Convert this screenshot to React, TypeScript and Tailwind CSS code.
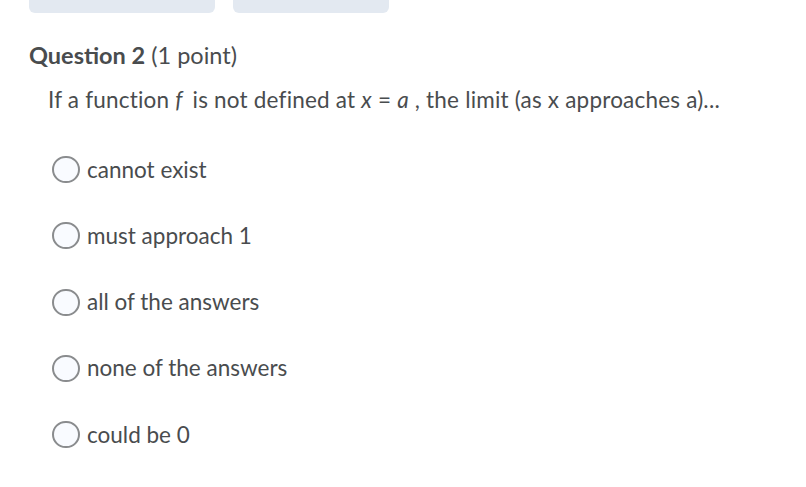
import React from 'react';

const options = ['cannot exist', 'must approach 1', 'all of the answers', 'none of the answers', 'could be 0'];

export default function App() {
  return (
    <div className="w-[806px] h-[487px] bg-white overflow-hidden text-[#494c4e]" style={{ fontFamily: 'Lato, "Open Sans", sans-serif' }}>
      {/* top buttons (cut off) */}
      <div className="flex gap-[18px] pl-[29px]">
        <div className="w-[186px] h-[13px] rounded-b-[6px] bg-[#e3e9f1]" />
        <div className="w-[156px] h-[13px] rounded-b-[6px] bg-[#e3e9f1]" />
      </div>

      <div className="pl-[29px] pt-[27px]">
        <h2 className="text-[23.5px] leading-[30px]">
          <span className="font-bold">Question 2</span> <span>(1 point)</span>
        </h2>
      </div>

      <p className="pl-[48px] pt-[15px] text-[22.5px] leading-[30px] tracking-[0.2px]">
        If a function <i className="pr-1">f</i> is not defined at <i>x</i> = <i>a</i> , the limit (as x approaches a)...
      </p>

      <div className="flex flex-col pl-[52px] pt-[39.5px] gap-[36.3px]">
        {options.map((o) => (
          <label key={o} className="flex items-center gap-[7px] h-[30px]">
            <span className="w-[28px] h-[27px] rounded-full border-2 border-[#8a8c8e] bg-[#f9fbff]" />
            <span className="text-[22.5px] leading-[30px]">{o}</span>
          </label>
        ))}
      </div>
    </div>
  );
}
